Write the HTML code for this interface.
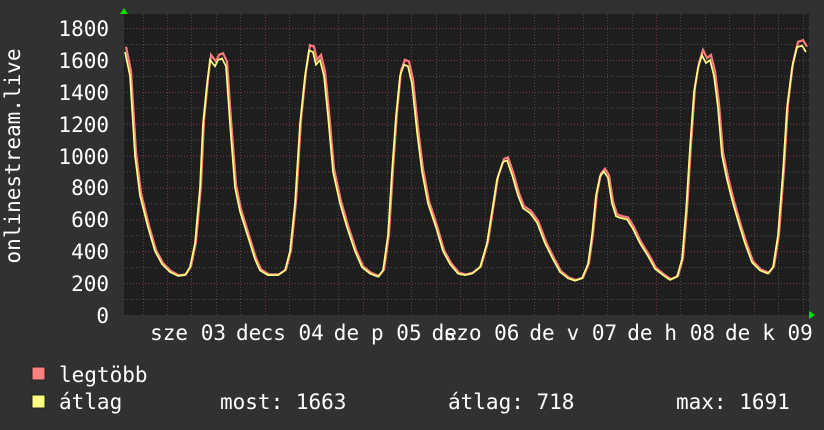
<!DOCTYPE html>
<html><head><meta charset="utf-8"><style>
html,body{margin:0;padding:0;background:#313131;width:824px;height:430px;overflow:hidden}
svg{display:block}
text{font-family:"DejaVu Sans Mono","Liberation Mono",monospace;font-size:21px;fill:#fff}
</style></head><body>
<svg width="824" height="430" xmlns="http://www.w3.org/2000/svg">
<rect x="0" y="0" width="824" height="430" fill="#313131"/>
<rect x="124" y="14" width="685" height="301" fill="#1e1e1e"/>
<g id="grid" stroke-width="1" stroke-dasharray="1,2"></g>
<polyline id="pk" fill="none" stroke="#ff7a7a" stroke-width="2.2"/>
<polyline id="yl" fill="none" stroke="#ffff80" stroke-width="1.7"/>
<polygon points="120,14 124,8 128,14" fill="#00dd00"/>
<polygon points="809,311 815,315 809,319" fill="#00dd00"/>
<g text-anchor="end">
<text x="109" y="36">1800</text><text x="109" y="68">1600</text><text x="109" y="100">1400</text>
<text x="109" y="132">1200</text><text x="109" y="164">1000</text><text x="109" y="195">800</text>
<text x="109" y="227">600</text><text x="109" y="259">400</text><text x="109" y="291">200</text>
<text x="109" y="323">0</text>
</g>
<text transform="translate(20,156) rotate(-90)" text-anchor="middle">onlinestream.live</text>
<g id="xl"></g>
<rect x="32" y="367" width="13" height="13" fill="#ff8080" stroke="#222" stroke-width="1"/>
<rect x="32" y="395" width="13" height="13" fill="#ffff80" stroke="#222" stroke-width="1"/>
<text x="59" y="382">legtöbb</text>
<text x="59" y="409">átlag</text>
<text x="220" y="409">most: 1663</text>
<text x="448" y="409">átlag: 718</text>
<text x="676" y="409">max: 1691</text>
</svg>
<script>
var ns="http://www.w3.org/2000/svg";
var g=document.getElementById('grid');
function ln(x1,y1,x2,y2,c){var l=document.createElementNS(ns,'line');l.setAttribute('x1',x1);l.setAttribute('y1',y1);l.setAttribute('x2',x2);l.setAttribute('y2',y2);l.setAttribute('stroke',c);g.appendChild(l);}
function Y(v){return 315-v*0.1594;}
for(var v=100;v<=1800;v+=100){ln(124,Y(v)+.5,809,Y(v)+.5,v%200==0?'#7a3d3d':'#4d4d4d');}
for(var x=167-24.5*1;x<809;x+=24.45){var d=Math.abs(((x-167)/97.8)-Math.round((x-167)/97.8))<0.05;ln(Math.round(x)+.5,14,Math.round(x)+.5,315,d?'#7a3d3d':'#4d4d4d');}
var d=[125,1650,130,1500,135,1000,140,750,148,550,155,400,162,320,170,270,178,245,185,250,190,300,195,450,200,800,203,1200,207,1450,210,1600,215,1560,218,1600,222,1610,226,1560,230,1200,235,800,240,650,245,550,250,450,255,350,260,280,268,250,278,250,285,280,290,400,295,700,300,1200,305,1500,309,1660,313,1650,316,1570,320,1600,324,1500,328,1250,333,900,340,700,347,550,355,400,362,300,370,260,378,240,383,280,388,500,392,900,396,1250,400,1500,404,1570,408,1560,412,1450,417,1150,422,900,428,700,436,550,443,400,450,320,458,260,465,250,472,260,480,300,487,450,492,650,497,850,503,960,507,970,512,880,518,750,523,670,530,640,537,580,545,450,553,350,560,270,568,230,575,215,582,230,588,320,592,500,596,750,600,870,604,900,608,860,612,700,616,620,620,610,627,600,633,540,640,450,648,370,655,290,663,250,670,220,677,240,682,350,686,650,690,1050,694,1400,698,1550,702,1630,706,1580,710,1600,714,1500,718,1300,722,1000,727,850,733,700,740,550,745,450,752,330,760,280,768,260,773,300,778,500,783,900,787,1300,792,1550,797,1680,802,1690,806,1650];
var p1=[],p2=[];for(var i=0;i<d.length;i+=2){p1.push((d[i]+1)+','+(Y(d[i+1]*1.02)).toFixed(1));p2.push(d[i]+','+Y(d[i+1]).toFixed(1));}
document.getElementById('pk').setAttribute('points',p1.join(' '));
document.getElementById('yl').setAttribute('points',p2.join(' '));
var xl=document.getElementById('xl');var labs=["sze 03","cs 04","p 05","szo 06","v 07","h 08","k 09"];
function tx(x,s,a){var t=document.createElementNS(ns,'text');t.setAttribute('x',x);t.setAttribute('y',340);if(a)t.setAttribute('text-anchor',a);t.textContent=s;xl.appendChild(t);}
for(var k=0;k<7;k++){tx(226+97.8*k,labs[k],'end');tx(236+97.8*k,'de');}
</script>
</body></html>
